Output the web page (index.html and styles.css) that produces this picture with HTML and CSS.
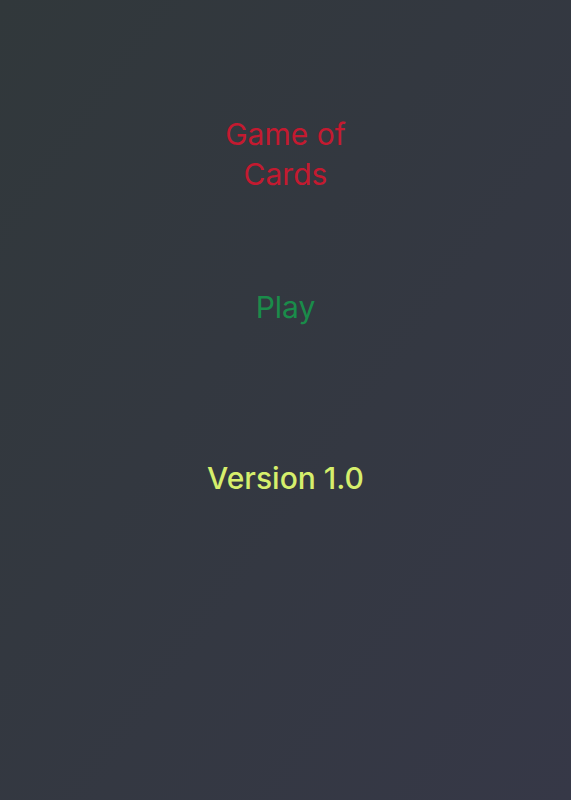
FILE: index.html
```html
<!DOCTYPE html>
<html>
<head>
<meta charset="utf-8">
<link rel="stylesheet" href="styles.css">
</head>
<body>
<main class="screen">
  <h1 class="title">Game of<br>Cards</h1>
  <div class="play">Play</div>
  <div class="version">Version 1.0</div>
</main>
</body>
</html>
```
FILE: styles.css
```css
html, body {
  margin: 0;
  padding: 0;
  height: 100%;
}
body {
  background: linear-gradient(to bottom right, #31383b, #363847);
  font-family: Inter, "Noto Sans", sans-serif;
}
.screen {
  display: flex;
  flex-direction: column;
  align-items: center;
  padding-top: 114px;
}
.title {
  margin: 0;
  font-size: 30px;
  font-weight: 400;
  line-height: 40px;
  color: #c41a30;
  text-align: center;
}
.play {
  margin-top: 93px;
  font-size: 30px;
  line-height: 40px;
  color: #1a8c4a;
}
.version {
  margin-top: 131px;
  font-size: 30px;
  font-weight: 500;
  line-height: 40px;
  color: #d6ef6c;
}
```
